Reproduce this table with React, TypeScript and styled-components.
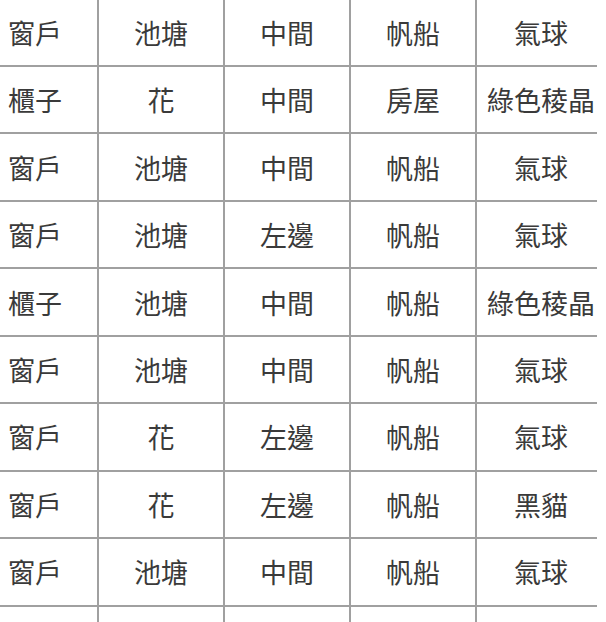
import React from "react";
import styled, { createGlobalStyle } from "styled-components";

const rows: string[][] = [
  ["窗戶", "池塘", "中間", "帆船", "氣球"],
  ["櫃子", "花", "中間", "房屋", "綠色稜晶"],
  ["窗戶", "池塘", "中間", "帆船", "氣球"],
  ["窗戶", "池塘", "左邊", "帆船", "氣球"],
  ["櫃子", "池塘", "中間", "帆船", "綠色稜晶"],
  ["窗戶", "池塘", "中間", "帆船", "氣球"],
  ["窗戶", "花", "左邊", "帆船", "氣球"],
  ["窗戶", "花", "左邊", "帆船", "黑貓"],
  ["窗戶", "池塘", "中間", "帆船", "氣球"],
  ["", "", "", "", ""],
];

const widths = [99, 126, 126, 126, 120];

const GlobalStyle = createGlobalStyle`
  html, body {
    margin: 0;
    padding: 0;
    background: #ffffff;
    overflow: hidden;
  }
  body {
    font-family: "Noto Sans CJK TC", "Noto Sans CJK SC", "Noto Sans", sans-serif;
  }
`;

const Table = styled.div`
  width: 597px;
  height: 622px;
  overflow: hidden;
  display: flex;
  flex-direction: column;
`;

const Row = styled.div`
  display: flex;
  height: 67.44px;
  flex-shrink: 0;
  box-sizing: border-box;
  border-bottom: 2px solid #a0a0a0;

  &:first-child {
    height: 67px;
  }
`;

const Cell = styled.div<{ $w: number; $first?: boolean; $last?: boolean }>`
  width: ${(p) => p.$w}px;
  flex-shrink: 0;
  box-sizing: border-box;
  display: flex;
  align-items: center;
  justify-content: ${(p) => (p.$first ? "flex-start" : "center")};
  padding-left: ${(p) => (p.$first ? "8px" : p.$last ? "8px" : "0")};
  border-right: ${(p) => (p.$last ? "none" : "2px solid #a0a0a0")};
  font-size: 27px;
  color: #3a3a3a;
  white-space: nowrap;
`;

export default function App() {
  return (
    <>
      <GlobalStyle />
      <Table>
        {rows.map((r, i) => (
          <Row key={i}>
            {r.map((c, j) => (
              <Cell
                key={j}
                $w={widths[j]}
                $first={j === 0}
                $last={j === r.length - 1}
              >
                {c}
              </Cell>
            ))}
          </Row>
        ))}
      </Table>
    </>
  );
}
